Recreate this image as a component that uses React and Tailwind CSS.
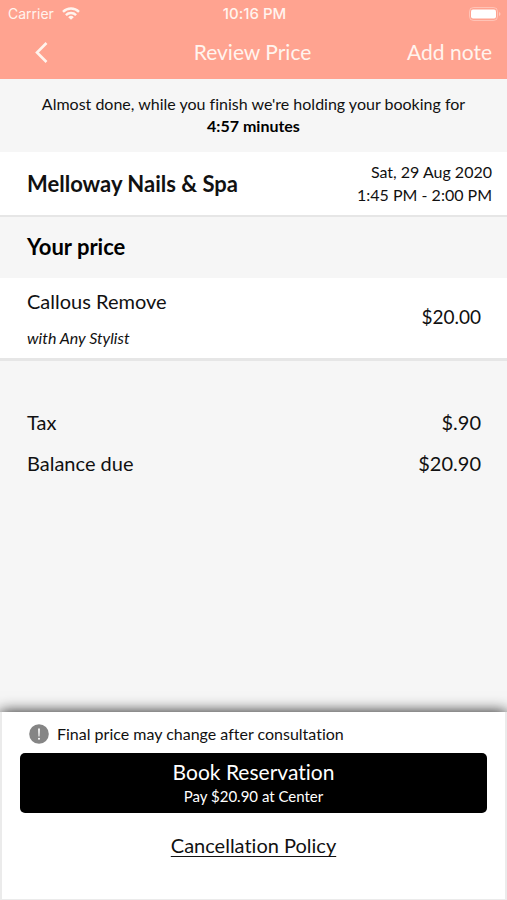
const totals = [
  { label: "Tax", amount: "$.90" },
  { label: "Balance due", amount: "$20.90" },
]

function WifiIcon() {
  return (
    <svg viewBox="0 0 18 13" className="h-[13px] w-[18px]" fill="none" stroke="currentColor" strokeWidth="2.4" aria-hidden="true">
      <path d="M1 4.800a11.400 11.400 0 0 1 16 0" />
      <path d="M3.900 8.100a7.200 7.200 0 0 1 10.200 0" />
      <path d="M9 12.800 6.200 10.200a4 4 0 0 1 5.600 0z" fill="currentColor" stroke="none" />
    </svg>
  )
}

function BatteryIcon() {
  return (
    <svg viewBox="0 0 32 14" className="h-[14px] w-[32px]" aria-hidden="true">
      <rect x="0.5" y="0.5" width="28" height="13" rx="4" fill="none" stroke="white" strokeOpacity="0.35" />
      <rect x="2" y="2.500" width="25" height="9" rx="2" fill="white" />
      <path d="M30 5v4c2-.8 2-3.200 0-4z" fill="white" fillOpacity="0.4" />
    </svg>
  )
}

function AlertIcon() {
  return (
    <svg viewBox="0 0 20 20" className="size-5 shrink-0" aria-hidden="true">
      <circle cx="10" cy="10" r="9.800" fill="#858585" />
      <path d="M9.100 4.500h1.800l-.4 8h-1z" fill="white" />
      <circle cx="10" cy="14.700" r="1" fill="white" />
    </svg>
  )
}

function Header() {
  return (
    <header className="bg-[#ffa390] text-[#fff4ee]">
      <div className="grid h-[27px] grid-cols-3 items-center pr-[6px] pl-2 font-['Inter',sans-serif] text-sm">
        <div className="flex items-center gap-2">
          <span>Carrier</span>
          <WifiIcon />
        </div>
        <span className="text-center text-[15px] font-medium">10:16 PM</span>
        <div className="flex justify-end">
          <BatteryIcon />
        </div>
      </div>
      <div className="grid h-[52px] grid-cols-[1fr_auto_1fr] items-center pr-[15px] pl-[13px] pb-[3px]">
        <button type="button" aria-label="Back" className="flex w-9 justify-end">
          <svg viewBox="0 0 16 24" className="h-6 w-4" fill="none" stroke="currentColor" strokeWidth="2.6" aria-hidden="true">
            <path d="M13.500 3 4 12.500l9.500 9.500" />
          </svg>
        </button>
        <h1 className="text-[21px] whitespace-nowrap">Review Price</h1>
        <button type="button" className="text-right text-[21px] whitespace-nowrap">
          Add note
        </button>
      </div>
    </header>
  )
}

function Footer() {
  return (
    <footer className="mt-auto border-x-2 border-b border-[#ebebeb] bg-white px-[18px] pt-[11px] pb-10 shadow-[0_0_14px_rgba(0,0,0,0.9)]">
      <p className="flex h-[22px] items-center gap-2 pl-[9px] text-base">
        <AlertIcon />
        Final price may change after consultation
      </p>
      <button type="button" className="mt-2 flex h-[60px] w-full flex-col items-center justify-center rounded-[5px] bg-black text-white">
        <span className="text-[21px] leading-[26px]">Book Reservation</span>
        <span className="text-[15px] leading-[22px]">Pay $20.90 at Center</span>
      </button>
      <div className="mt-[18px] text-center">
        <a href="#cancellation-policy" className="text-xl leading-7 underline decoration-1 underline-offset-3">
          Cancellation Policy
        </a>
      </div>
    </footer>
  )
}

function App() {
  return (
    <div className="flex min-h-screen flex-col bg-[#f6f6f6] font-['Lato',sans-serif] text-[#111111] [font-variant-ligatures:none]">
      <Header />
      <main>
        <p className="px-4 pt-[14px] pb-[15px] text-center text-base leading-[22px]">
          Almost done, while you finish we're holding your booking for
          <strong className="block text-black">4:57 minutes</strong>
        </p>

        <section className="flex items-center justify-between border-b-2 border-[#e6e6e6] bg-white pt-2 pb-[9px] pr-[15px] pl-[27px]">
          <h2 className="pt-[2px] text-[22px] leading-7 font-bold">Melloway Nails &amp; Spa</h2>
          <div className="text-right text-base leading-[23px]">
            <p>Sat, 29 Aug 2020</p>
            <p>1:45 PM - 2:00 PM</p>
          </div>
        </section>

        <h2 className="px-[27px] pt-4 pb-[17px] text-[22px] leading-7 font-bold text-black">Your price</h2>

        <section className="flex items-center justify-between border-b-3 border-[#e6e6e6] bg-white pt-[9px] pb-[10px] pr-[26px] pl-[27px]">
          <div>
            <h3 className="text-xl leading-7">Callous Remove</h3>
            <p className="mt-3 text-base leading-[21px] italic">with Any Stylist</p>
          </div>
          <span className="text-[19px]">$20.00</span>
        </section>

        <dl className="pt-10 pr-[26px] pl-[27px]">
          {totals.map((t) => (
            <div key={t.label} className="flex h-[41px] items-center justify-between text-xl">
              <dt>{t.label}</dt>
              <dd>{t.amount}</dd>
            </div>
          ))}
        </dl>
      </main>
      <Footer />
    </div>
  )
}

export default App
